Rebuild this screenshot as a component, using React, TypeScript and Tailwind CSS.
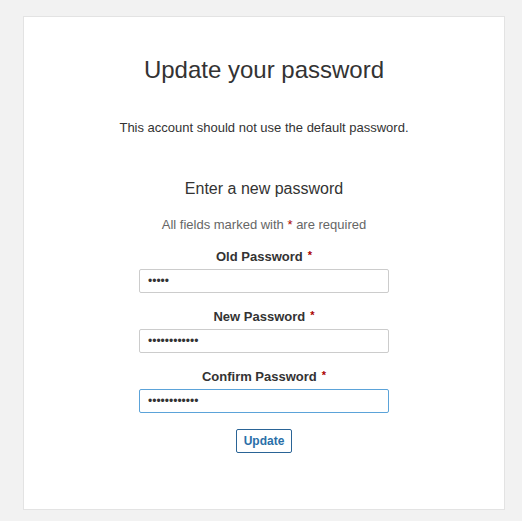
import React from "react"

const fields = [
  { label: "Old Password", value: "12345", focused: false },
  { label: "New Password", value: "abcdefghijkl", focused: false },
  { label: "Confirm Password", value: "abcdefghijkl", focused: true },
]

export default function App() {
  return (
    <div
      className="min-h-[521px] w-full bg-[#f2f2f2] pl-[23px] pr-[17px] pt-4 text-[#333]"
      style={{ fontFamily: '"Liberation Sans", Arial, sans-serif' }}
    >
      <div className="flex h-[494px] flex-col items-center border border-[#e3e3e3] bg-white pt-[39px]">
        <h1 className="text-[24px] leading-[28px] font-normal">Update your password</h1>
        <p className="mt-[36px] text-[13px] leading-[16px]">
          This account should not use the default password.
        </p>
        <h2 className="mt-[43px] text-[16px] leading-[20px] font-normal">Enter a new password</h2>
        <p className="mt-[18px] text-[13px] leading-[16px] text-[#666]">
          All fields marked with <span className="text-[#a00]">*</span> are required
        </p>

        <form className="mt-[16px] flex flex-col items-center">
          {fields.map((f) => (
            <div key={f.label} className="mb-[16px] flex flex-col items-center">
              <label className="flex items-start text-[13px] leading-[16px] font-bold">
                {f.label}
                <span className="ml-[5px] text-[11px] leading-[12px] text-[#a00]">*</span>
              </label>
              <input
                type="password"
                readOnly
                value={f.value}
                className={
                  f.focused
                    ? "mt-[4px] h-[24px] w-[250px] rounded-[2px] border border-[#5ba3d9] px-[8px] text-[12px] outline-none"
                    : "mt-[4px] h-[24px] w-[250px] rounded-[2px] border border-[#cccccc] px-[8px] text-[12px] outline-none"
                }
              />
            </div>
          ))}
          <button
            type="button"
            className="h-[24px] rounded-[2px] border border-[#2a6496] bg-white px-[7px] text-[12px] font-bold text-[#2a6fa8]"
          >
            Update
          </button>
        </form>
      </div>
    </div>
  )
}
